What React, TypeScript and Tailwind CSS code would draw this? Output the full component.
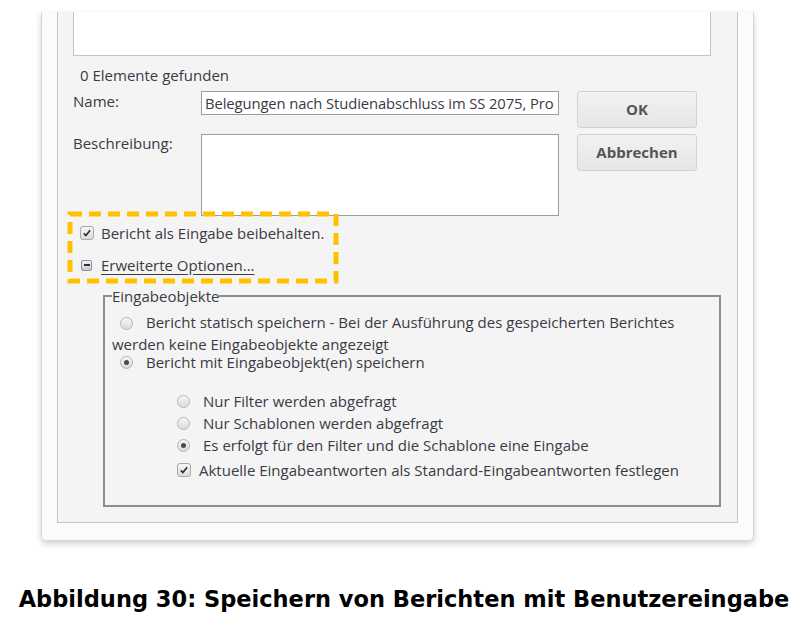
import React from 'react';

// Radio-Button im Windows-Stil
function Radio({ checked }: { checked?: boolean }) {
  return (
    <span className="inline-flex h-[13px] w-[13px] shrink-0 items-center justify-center rounded-full border border-[#b4b4b4] bg-linear-to-b from-[#f7f7f7] to-[#dadada] align-[-2px]">
      {checked && <span className="h-[5px] w-[5px] rounded-full bg-[#4a4a4a]" />}
    </span>
  );
}

// Checkbox mit Haken
function Check() {
  return (
    <span className="inline-flex h-[14px] w-[14px] shrink-0 items-center justify-center rounded-[3px] border border-[#a9a9a9] bg-linear-to-b from-[#f7f7f7] to-[#dcdcdc]">
      <svg viewBox="0 0 12 12" className="h-[10px] w-[10px]">
        <path d="M2.2 6.4 L4.7 9 L9.8 2.8" fill="none" stroke="#2e2e2e" strokeWidth="2" />
      </svg>
    </span>
  );
}

const App: React.FC = () => {
  return (
    <div className="relative min-h-[619px] w-[800px] bg-white pt-[12px] font-['Open_Sans',sans-serif] text-[15px] text-[#3a3a44]">
      {/* Dialog */}
      <div className="ml-[41px] w-[713px] rounded-b-[5px] border-x border-b border-[#d6d6d6] bg-[#fbfbfb] pb-[17px] shadow-[0_3px_6px_rgba(0,0,0,0.18)]">
        <div className="mx-[15px] border-x border-b border-[#c6c6c6] bg-[#f4f4f4] pb-[15px] pl-[15px] pr-[26px]">
          {/* Ergebnisliste */}
          <div className="h-[44px] w-[638px] border-x border-b border-[#c4c4c4] bg-white" />

          <div className="mt-[10px] pl-[7px] leading-[18px]">0 Elemente gefunden</div>

          {/* Name / Beschreibung / Buttons */}
          <div className="mt-[7px] flex">
            <div>
              <div className="flex">
                <div className="w-[128px] pt-[1px] leading-[18px]">Name:</div>
                <div className="h-[24px] w-[358px] overflow-hidden whitespace-nowrap border border-[#9c9c9c] bg-white pl-[3px] text-[14.8px] leading-[22px] tracking-[-0.1px]">
                  Belegungen nach Studienabschluss im SS 2075, Pro
                </div>
              </div>
              <div className="mt-[19px] flex">
                <div className="w-[128px] leading-[18px]">Beschreibung:</div>
                <div className="h-[82px] w-[358px] border border-[#9c9c9c] bg-white" />
              </div>
            </div>
            <div className="ml-[18px] flex flex-col gap-[6px]">
              <button className="h-[37px] w-[120px] rounded-[3px] border border-[#d2d2d2] bg-linear-to-b from-[#f2f2f2] to-[#e6e6e6] text-[15px] font-bold text-[#555]">
                OK
              </button>
              <button className="h-[37px] w-[120px] rounded-[3px] border border-[#d2d2d2] bg-linear-to-b from-[#f2f2f2] to-[#e6e6e6] text-[15px] font-bold text-[#555]">
                Abbrechen
              </button>
            </div>
          </div>

          {/* Bericht beibehalten */}
          <div className="mt-[8px] flex items-center pl-[7px] leading-[18px]">
            <Check />
            <span className="ml-[7px]">Bericht als Eingabe beibehalten.</span>
          </div>
          <div className="mt-[14px] flex items-center pl-[8px] leading-[18px]">
            <span className="flex h-[11px] w-[11px] items-center justify-center rounded-[2px] border border-[#8e8e9c] bg-linear-to-b from-[#f4f4f6] to-[#c9c9d2]">
              <span className="h-[2px] w-[6px] bg-[#2f2f3a]" />
            </span>
            <span className="ml-[9px] underline underline-offset-[3px]">Erweiterte Optionen...</span>
          </div>

          {/* Eingabeobjekte */}
          <fieldset className="ml-[30px] mt-[13px] w-[618px] border-2 border-[#8d8d8d] pb-[24px]">
            <legend className="ml-[7px] px-0 leading-[18px]">Eingabeobjekte</legend>
            <div className="mt-[6px] pl-[7px] leading-[22px]">
              <span className="ml-[8px] mr-[13px]">
                <Radio />
              </span>
              Bericht statisch speichern - Bei der Ausführung des gespeicherten Berichtes
              <br />
              werden keine Eingabeobjekte angezeigt
            </div>
            <div className="-mt-[2px] flex items-center pl-[15px] leading-[18px]">
              <Radio checked />
              <span className="ml-[13px]">Bericht mit Eingabeobjekt(en) speichern</span>
            </div>

            <div className="mt-[19px] pl-[72px]">
              <div className="flex items-center leading-[22px]">
                <Radio />
                <span className="ml-[13px]">Nur Filter werden abgefragt</span>
              </div>
              <div className="flex items-center leading-[22px]">
                <Radio />
                <span className="ml-[13px]">Nur Schablonen werden abgefragt</span>
              </div>
              <div className="flex items-center leading-[22px]">
                <Radio checked />
                <span className="ml-[13px]">Es erfolgt für den Filter und die Schablone eine Eingabe</span>
              </div>
              <div className="mt-[3px] flex items-center leading-[22px]">
                <Check />
                <span className="ml-[8px]">Aktuelle Eingabeantworten als Standard-Eingabeantworten festlegen</span>
              </div>
            </div>
          </fieldset>
        </div>
      </div>

      {/* Bildunterschrift */}
      <div className="mt-[45px] pl-[8px] text-center font-['DejaVu_Sans',sans-serif] text-[22.5px] font-bold leading-[26px] text-black">
        Abbildung 30: Speichern von Berichten mit Benutzereingabe
      </div>

      {/* Markierung */}
      <svg className="absolute left-[65px] top-[209px]" width="276" height="77" viewBox="0 0 276 77">
        <rect x="5" y="5" width="266" height="67" fill="none" stroke="#ffc000" strokeWidth="5" strokeDasharray="12 7" />
      </svg>
    </div>
  );
};

export default App;
